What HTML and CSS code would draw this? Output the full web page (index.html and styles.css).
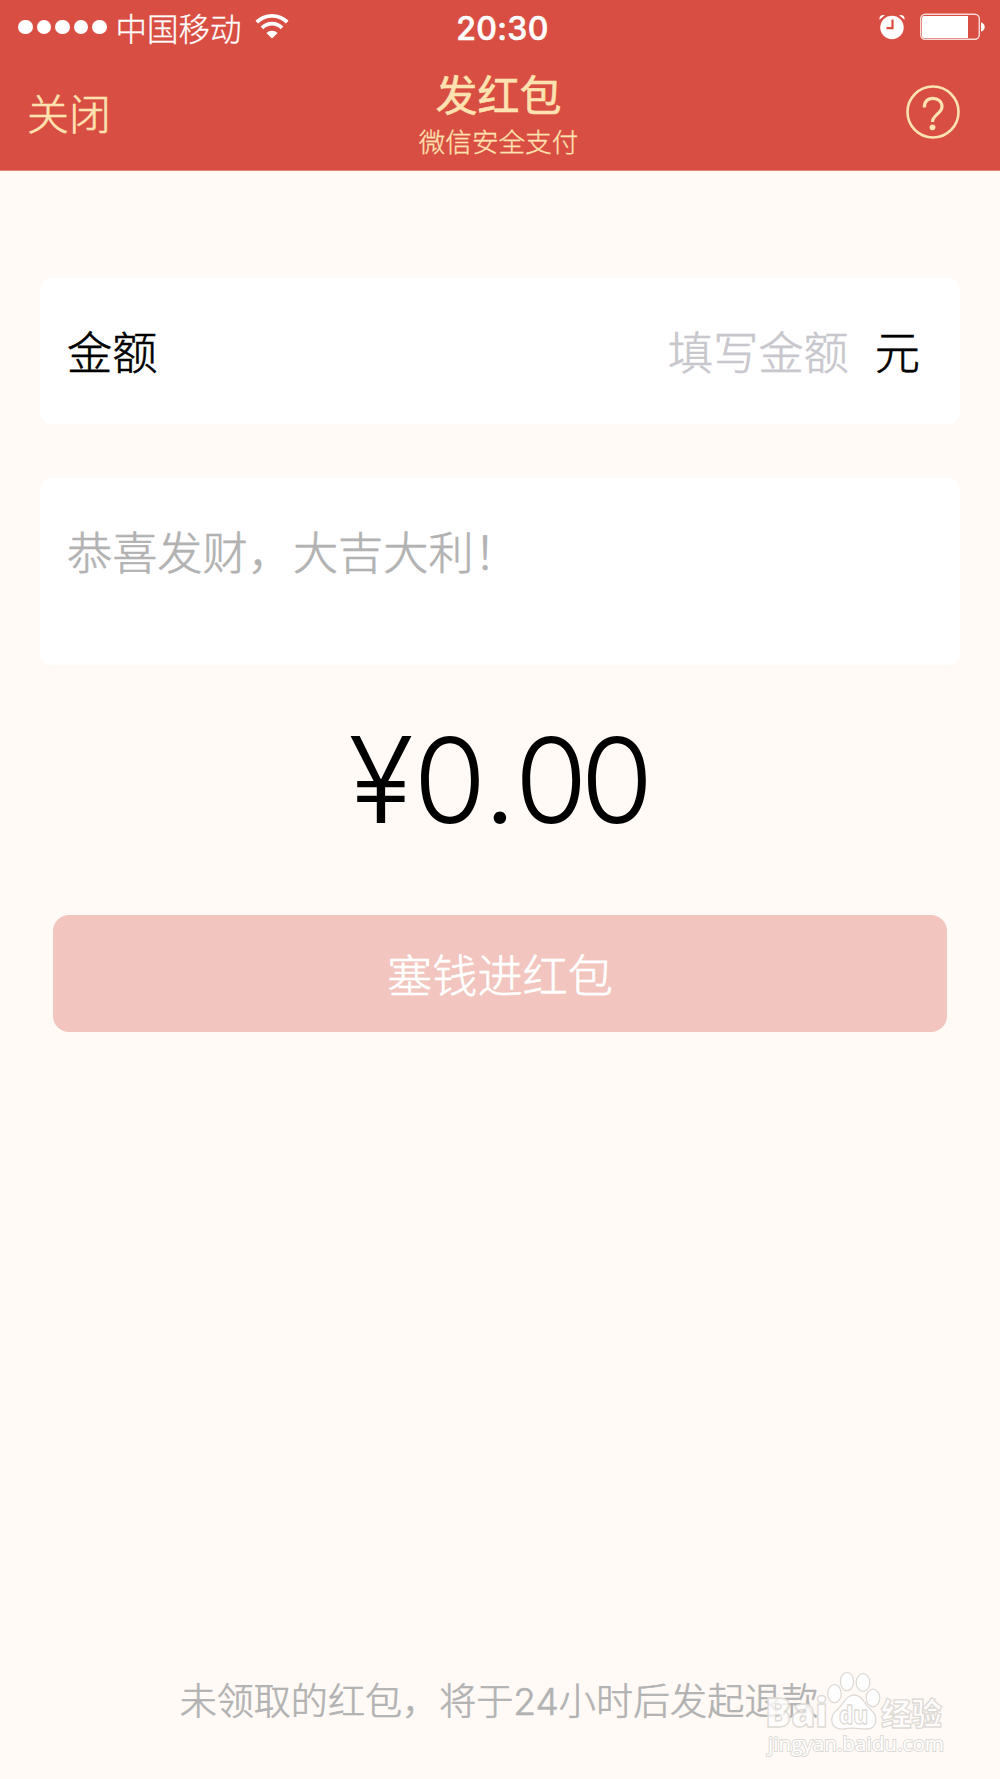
FILE: index.html
```
<!DOCTYPE html>
<html lang="zh-CN">
<head>
  <meta charset="UTF-8">
  <meta name="viewport" content="width=device-width, initial-scale=1.0">
  <title>发红包</title>
  <link rel="stylesheet" href="styles.css">
</head>
<body>

<!-- Header -->
<div class="header">
  <div class="status-bar">
    <div class="status-left">
      <div class="signal"><i></i><i></i><i></i><i></i><i></i></div>
      <span class="carrier">中国移动</span>
      <svg class="wifi" width="34" height="26" viewBox="0 0 34 26">
        <path d="M1.800 8.200a21.500 21.500 0 0 1 30.400 0" fill="none" stroke="#fff" stroke-width="3.800"/>
        <path d="M7 13.800a14 14 0 0 1 20 0" fill="none" stroke="#fff" stroke-width="3.800"/>
        <path d="M11.300 19a8.200 8.200 0 0 1 11.400 0L17 24.500z" fill="#fff"/>
      </svg>
    </div>
    <div class="time">20:30</div>
    <div class="status-right">
      <svg class="alarm" width="26" height="26" viewBox="0 0 26 26">
        <circle cx="13" cy="13.500" r="11.700" fill="#fff"/>
        <path d="M.5 5.800C-.2 2.500 2.500 0 5.800 1.200zM25.500 5.800C26.200 2.500 23.500 0 20.200 1.200z" fill="#fff"/>
        <path d="M13.500 5.500v8.600H7.500" fill="none" stroke="#d94e43" stroke-width="2.200"/>
      </svg>
      <svg class="battery" width="66" height="28" viewBox="0 0 66 28">
        <rect x=".7" y="1.200" width="58.600" height="25" rx="4.500" fill="none" stroke="#fff" stroke-opacity=".8" stroke-width="1.400"/>
        <path d="M4 3h44v22H4a2 2 0 0 1-2-2V5a2 2 0 0 1 2-2z" fill="#fff"/>
        <path d="M61 9.500c5 .8 5 8.200 0 9z" fill="#fff"/>
      </svg>
    </div>
  </div>

  <div class="nav">
    <div class="close">关闭</div>
    <div class="title">
      <h1>发红包</h1>
      <p>微信安全支付</p>
    </div>
    <svg class="help" width="54" height="54" viewBox="0 0 54 54" fill="none" stroke="#ffe2b1">
      <circle cx="27" cy="27" r="25.500" stroke-width="2.600"/>
      <path d="M18.300 22.500C18.300 16.500 21.800 13.300 27 13.300s9 3.500 9 8.200c0 7-9.500 8.300-9.500 15.500" stroke-width="3.200"/>
      <circle cx="26.500" cy="42.300" r="2.900" fill="#ffe2b1" stroke="none"/>
    </svg>
  </div>
</div>

<div class="container">
  <div class="card amount-card">
    <span>金额</span>
    <span class="placeholder">填写金额</span>
    <span class="unit">元</span>
  </div>

  <div class="card message-card">恭喜发财，大吉大利！</div>

  <div class="total"><span class="yen">¥</span>0<span class="dot">.</span>00</div>

  <button class="submit-btn">塞钱进红包</button>
</div>

<div class="footer">
  <p>未领取的红包，将于24小时后发起退款</p>
  <svg class="watermark" width="190" height="96" viewBox="0 0 190 96">
    <g class="paw">
      <ellipse cx="74.500" cy="25.700" rx="6.800" ry="9"/>
      <ellipse cx="87" cy="13.500" rx="6.600" ry="9.200"/>
      <ellipse cx="103" cy="14.500" rx="6.800" ry="8.800"/>
      <ellipse cx="113" cy="30" rx="6.800" ry="8.800"/>
      <path d="M94 27c8 0 10 8 15 13 11 9 8 21-3 21-7 0-14-2-22 0-14 1-16-12-6-20 6-5 8-14 16-14z"/>
    </g>
    <g class="mark">
      <text x="5" y="59" font-size="40" textLength="63" lengthAdjust="spacingAndGlyphs">Bai</text>
      <text x="79" y="56" font-size="25" textLength="29" lengthAdjust="spacingAndGlyphs">du</text>
      <text x="121" y="57" font-size="31" textLength="61" lengthAdjust="spacingAndGlyphs">经验</text>
      <text class="url" x="8" y="83" font-size="20.500" textLength="176" lengthAdjust="spacingAndGlyphs">jingyan.baidu.com</text>
    </g>
  </svg>
</div>

</body>
</html>
```
FILE: styles.css
```
/* Basic reset */
* {
  margin: 0;
  padding: 0;
  box-sizing: border-box;
}

body {
  display: flex;
  flex-direction: column;
  height: 1779px;
  font-family: "Noto Sans CJK SC", sans-serif;
  background-color: #fffaf5;
  color: #000;
  font-weight: 300;
  -webkit-text-stroke: 0.6px;
}

/* Header */
.header {
  height: 171px;
  background-color: #d94e43;
  border-bottom: 1px solid #e78275;
}

.status-bar {
  display: grid;
  grid-template-columns: 1fr auto 1fr;
  align-items: center;
  height: 54px;
  padding: 0 14px 0 18px;
  color: #fff;
}

.status-left,
.status-right {
  display: flex;
  align-items: center;
}

.status-right {
  justify-content: flex-end;
  gap: 15px;
}

.signal {
  display: flex;
  gap: 4px;
}

.signal i {
  width: 14.5px;
  height: 14.5px;
  border-radius: 50%;
  background-color: #fff;
}

.carrier {
  margin-left: 9px;
  font-size: 31.5px;
  line-height: 54px;
  -webkit-text-stroke-width: 0.3px;
}

.wifi {
  margin-left: 13px;
}

.time {
  padding: 2px 0 0 1px;
  font-family: Inter, sans-serif;
  font-size: 32px;
  font-weight: 500;
  letter-spacing: 0.3px;
}

/* Title row */
.nav {
  display: grid;
  grid-template-columns: 1fr auto 1fr;
  height: 116px;
  padding: 0 40px 0 37px;
  color: #ffe2b1;
}

.close {
  margin-left: -10px;
  padding-top: 27px;
  font-size: 42px;
  line-height: 62px;
}

.title {
  padding-top: 8px;
  text-align: center;
}

.title h1 {
  font-size: 42px;
  font-weight: 400;
  line-height: 61px;
}

.title p {
  font-size: 26.6px;
  line-height: 36px;
  -webkit-text-stroke-width: 0.3px;
}

.help {
  justify-self: end;
  margin-top: 31px;
}

/* Cards */
.container {
  padding: 107px 40px 0;
}

.card {
  border-radius: 12px;
  background-color: #fff;
  font-size: 45.2px;
}

.amount-card {
  display: flex;
  align-items: center;
  height: 146px;
  padding: 0 40px 2px 27px;
}

.placeholder {
  margin-left: auto;
  color: #c8c7cd;
}

.unit {
  margin-left: 26px;
}

.message-card {
  height: 187px;
  margin-top: 54px;
  padding: 40px 27px;
  color: #b2b2b2;
  line-height: 66px;
}

.total {
  height: 140px;
  margin-top: 45px;
  padding-right: 5px;
  font-family: Inter, sans-serif;
  font-size: 118px;
  font-weight: 300;
  letter-spacing: -7px;
  line-height: 140px;
  text-align: center;
  -webkit-text-stroke-width: 0;
}

.yen {
  margin-right: 7px;
  font-size: 120px;
}

.dot {
  margin: 0 5px 0 4px;
}

.submit-btn {
  display: block;
  width: 894px;
  height: 117px;
  margin: 65px auto 0;
  border: none;
  border-radius: 16px;
  background-color: #f2c5bf;
  color: #fff;
  font-family: inherit;
  font-size: 45.2px;
  font-weight: 300;
  -webkit-text-stroke: 0.6px;
}

/* Footer */
.footer {
  position: relative;
  margin-top: auto;
  height: 114px;
  padding-right: 2px;
  text-align: center;
  color: #b2b2b2;
  font-family: Inter, "Noto Sans CJK SC", sans-serif;
  font-size: 37.1px;
  line-height: 73px;
}

/* Watermark over the footer text */
.watermark {
  position: absolute;
  right: 50px;
  bottom: 15px;
  overflow: visible;
  font-family: "Open Sans", "Noto Sans CJK SC", sans-serif;
  font-weight: 800;
  -webkit-text-stroke-width: 0;
}

.paw {
  fill: #fff;
  stroke: #dedad6;
  stroke-width: 1.3px;
}

.mark text {
  fill: rgba(255, 255, 255, 0.8);
  stroke: #dedad6;
  stroke-width: 1.3px;
}

.mark .url {
  font-weight: 400;
  fill: #fff;
  stroke-width: 2px;
  paint-order: stroke;
}
```
